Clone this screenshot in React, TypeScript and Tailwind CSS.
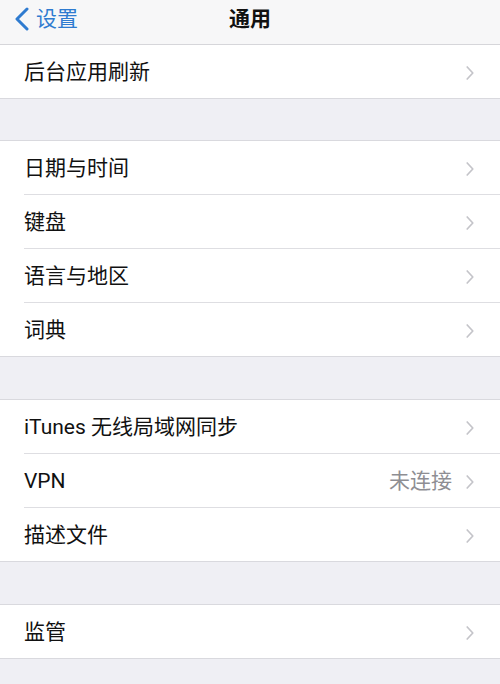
import React from "react";

const FONT = { fontFamily: 'Roboto, "Noto Sans CJK SC", sans-serif' };

function Chevron() {
  return (
    <svg width="10" height="16" viewBox="0 0 10 16" className="shrink-0">
      <path d="M2.2 2 L7.8 8 L2.2 14" fill="none" stroke="#c4c4c9" strokeWidth="1.7" strokeLinecap="round" strokeLinejoin="round" />
    </svg>
  );
}

function Row({ label, value, last }: { label: string; value?: string; last?: boolean }) {
  return (
    <div className="bg-white pl-[24px]">
      <div className={`flex items-center pr-[25px] pt-[2px] ${last ? "h-[53px]" : "h-[54px] border-b border-[#dedee2]"}`}>
        <span className="flex-1 text-[21px] text-[#111111] leading-none">{label}</span>
        {value && <span className="text-[21px] text-[#8e8e93] leading-none mr-[13px]">{value}</span>}
        <Chevron />
      </div>
    </div>
  );
}

function Group({ items, top = true }: { items: { label: string; value?: string }[]; top?: boolean }) {
  return (
    <div className={`${top ? "border-t" : ""} border-b border-[#d9d9de] bg-white`}>
      {items.map((it, i) => (
        <Row key={it.label} label={it.label} value={it.value} last={i === items.length - 1} />
      ))}
    </div>
  );
}

export default function App() {
  return (
    <div className="w-[500px] h-[684px] bg-[#efeff4] overflow-hidden" style={FONT}>
      <div className="h-[45px] bg-[#f7f7f8] border-b border-[#d6d6da] relative flex items-center">
        <div className="flex items-center pl-[14px] pb-[6px]">
          <svg width="16" height="24" viewBox="0 0 16 24">
            <path d="M13 2 L3 12 L13 22" fill="none" stroke="#2f7bd0" strokeWidth="3" strokeLinecap="round" strokeLinejoin="round" />
          </svg>
          <span className="ml-[6px] text-[21px] text-[#2f7bd0] leading-none">设置</span>
        </div>
        <div className="absolute left-0 right-0 top-0 h-[38px] flex items-center justify-center">
          <span className="text-[21px] font-semibold text-[#111] leading-none">通用</span>
        </div>
      </div>
      <Group top={false} items={[{ label: "后台应用刷新" }]} />
      <div className="h-[41px]" />
      <Group items={[{ label: "日期与时间" }, { label: "键盘" }, { label: "语言与地区" }, { label: "词典" }]} />
      <div className="h-[42px]" />
      <Group items={[{ label: "iTunes 无线局域网同步" }, { label: "VPN", value: "未连接" }, { label: "描述文件" }]} />
      <div className="h-[42px]" />
      <Group items={[{ label: "监管" }]} />
    </div>
  );
}
